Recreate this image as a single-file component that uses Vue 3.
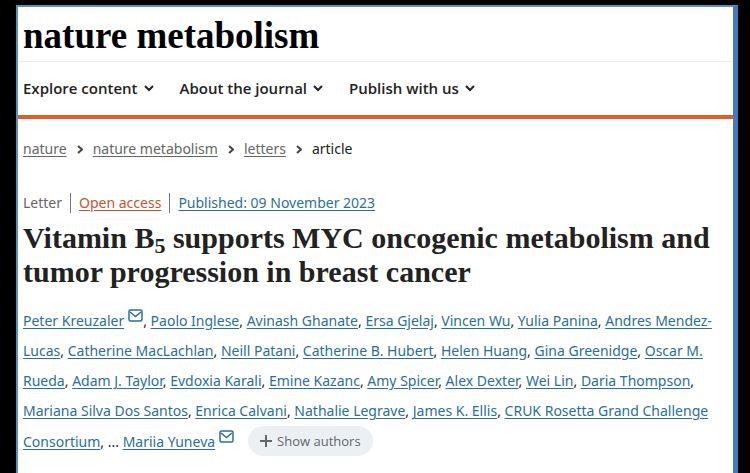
<script setup>
const menus = ['Explore content', 'About the journal', 'Publish with us']
const crumbs = ['nature', 'nature metabolism', 'letters']
const authors = [
  { name: 'Peter Kreuzaler', mail: true },
  { name: 'Paolo Inglese' },
  { name: 'Avinash Ghanate' },
  { name: 'Ersa Gjelaj' },
  { name: 'Vincen Wu' },
  { name: 'Yulia Panina' },
  { name: 'Andres Mendez-Lucas' },
  { name: 'Catherine MacLachlan' },
  { name: 'Neill Patani' },
  { name: 'Catherine B. Hubert' },
  { name: 'Helen Huang' },
  { name: 'Gina Greenidge' },
  { name: 'Oscar M. Rueda' },
  { name: 'Adam J. Taylor' },
  { name: 'Evdoxia Karali' },
  { name: 'Emine Kazanc' },
  { name: 'Amy Spicer' },
  { name: 'Alex Dexter' },
  { name: 'Wei Lin' },
  { name: 'Daria Thompson' },
  { name: 'Mariana Silva Dos Santos' },
  { name: 'Enrica Calvani' },
  { name: 'Nathalie Legrave' },
  { name: 'James K. Ellis' },
  { name: 'CRUK Rosetta Grand Challenge Consortium' },
]
</script>

<template>
  <div class="page">
    <header>
      <a class="logo" href="#">nature metabolism</a>
      <nav class="menu" aria-label="Main">
        <button v-for="m in menus" :key="m" type="button" class="menu-item">
          {{ m }}
          <svg class="chevron" viewBox="0 0 10 7" aria-hidden="true"><path d="M1 1l4 4 4-4" /></svg>
        </button>
      </nav>
    </header>
    <main>
      <nav class="crumbs" aria-label="Breadcrumbs">
        <template v-for="c in crumbs" :key="c">
          <a href="#">{{ c }}</a>
          <svg class="arrow" viewBox="0 0 6 9" aria-hidden="true"><path d="M1 1l4 3.500-4 3.500" /></svg>
        </template>
        <span class="current">article</span>
      </nav>
      <div class="meta">
        <span>Letter</span>
        <a class="open" href="#">Open access</a>
        <a class="date" href="#">Published: 09 November 2023</a>
      </div>
      <h1>Vitamin B<sub>5</sub> supports MYC oncogenic metabolism and tumor progression in breast cancer</h1>
      <p class="authors">
        <template v-for="a in authors" :key="a.name"><a href="#">{{ a.name }}<svg v-if="a.mail" class="mail" viewBox="0 0 15 13" aria-hidden="true"><rect x="1" y="1" width="13" height="11" rx="1.500" /><path d="M2 3l5.500 4.500L13 3" /></svg></a>, </template>
        <span>... </span>
        <a href="#">Mariia Yuneva<svg class="mail" viewBox="0 0 15 13" aria-hidden="true"><rect x="1" y="1" width="13" height="11" rx="1.500" /><path d="M2 3l5.500 4.500L13 3" /></svg></a>
        <button type="button" class="show">
          <svg class="plus" viewBox="0 0 12 12" aria-hidden="true"><path d="M6 0v12M0 6h12" /></svg>
          Show authors
        </button>
      </p>
    </main>
  </div>
</template>

<style>
body {
  background: #000;
}
#app {
  padding-top: 5px;
}
</style>

<style scoped>
.page {
  box-sizing: border-box;
  min-height: calc(100vh - 5px);
  margin: 0 12px 0 16px;
  border: 2px solid #5b8fbe;
  border-right: 5px solid #4479bd;
  border-bottom: 0;
  background: #fff;
  color: #222;
  font-family: "Noto Sans", "Open Sans", sans-serif;
  font-size: 14px;
  line-height: 20px;
}
.logo {
  display: block;
  padding: 9px 5px 5px;
  border-bottom: 1px solid #eee;
  color: #000;
  font: bold 37px/40px "Liberation Serif", serif;
  text-decoration: none;
}
.menu {
  display: flex;
  gap: 26px;
  padding: 16px 5px;
  border-bottom: 4px solid #dc5f2c;
}
.menu-item {
  display: flex;
  align-items: center;
  gap: 6px;
  padding: 0;
  border: 0;
  background: none;
  color: #222;
  font: 600 15px/21px "Open Sans", "Noto Sans", sans-serif;
}
svg {
  fill: none;
  stroke: currentColor;
}
.chevron {
  width: 10px;
  height: 7px;
  stroke-width: 2;
}
main {
  padding: 20px 4px 0 5px;
}
.crumbs {
  display: flex;
  align-items: center;
  gap: 10px;
}
.crumbs a {
  color: #666;
}
.arrow {
  width: 6px;
  height: 9px;
  stroke: #444;
  stroke-width: 2;
}
.meta {
  display: flex;
  margin-top: 34px;
  color: #666;
}
.meta a {
  margin-left: 8px;
  padding-left: 8px;
  border-left: 1px solid #777;
}
.meta .open {
  color: #c65330;
}
.meta .date {
  color: #2a6f98;
}
a {
  text-underline-offset: 2px;
}
h1 {
  margin: 8px 0 0;
  font: bold 30px/34px "Liberation Serif", serif;
}
sub {
  font-size: 22px;
  line-height: 0;
  vertical-align: -5px;
}
.authors {
  margin: 17px 0 0;
  line-height: 30px;
}
.authors a {
  color: #2a6f98;
}
.mail {
  width: 15px;
  height: 13px;
  margin-left: 4px;
  vertical-align: 4px;
  stroke-width: 1.5;
}
.show {
  display: inline-flex;
  align-items: center;
  gap: 5px;
  margin-left: 14px;
  padding: 5px 12px;
  border: 0;
  border-radius: 15px;
  background: #ebf0f5;
  color: #666;
  font: 13px/20px "Open Sans", "Noto Sans", sans-serif;
}
.plus {
  width: 12px;
  height: 12px;
  stroke-width: 2;
}
</style>
